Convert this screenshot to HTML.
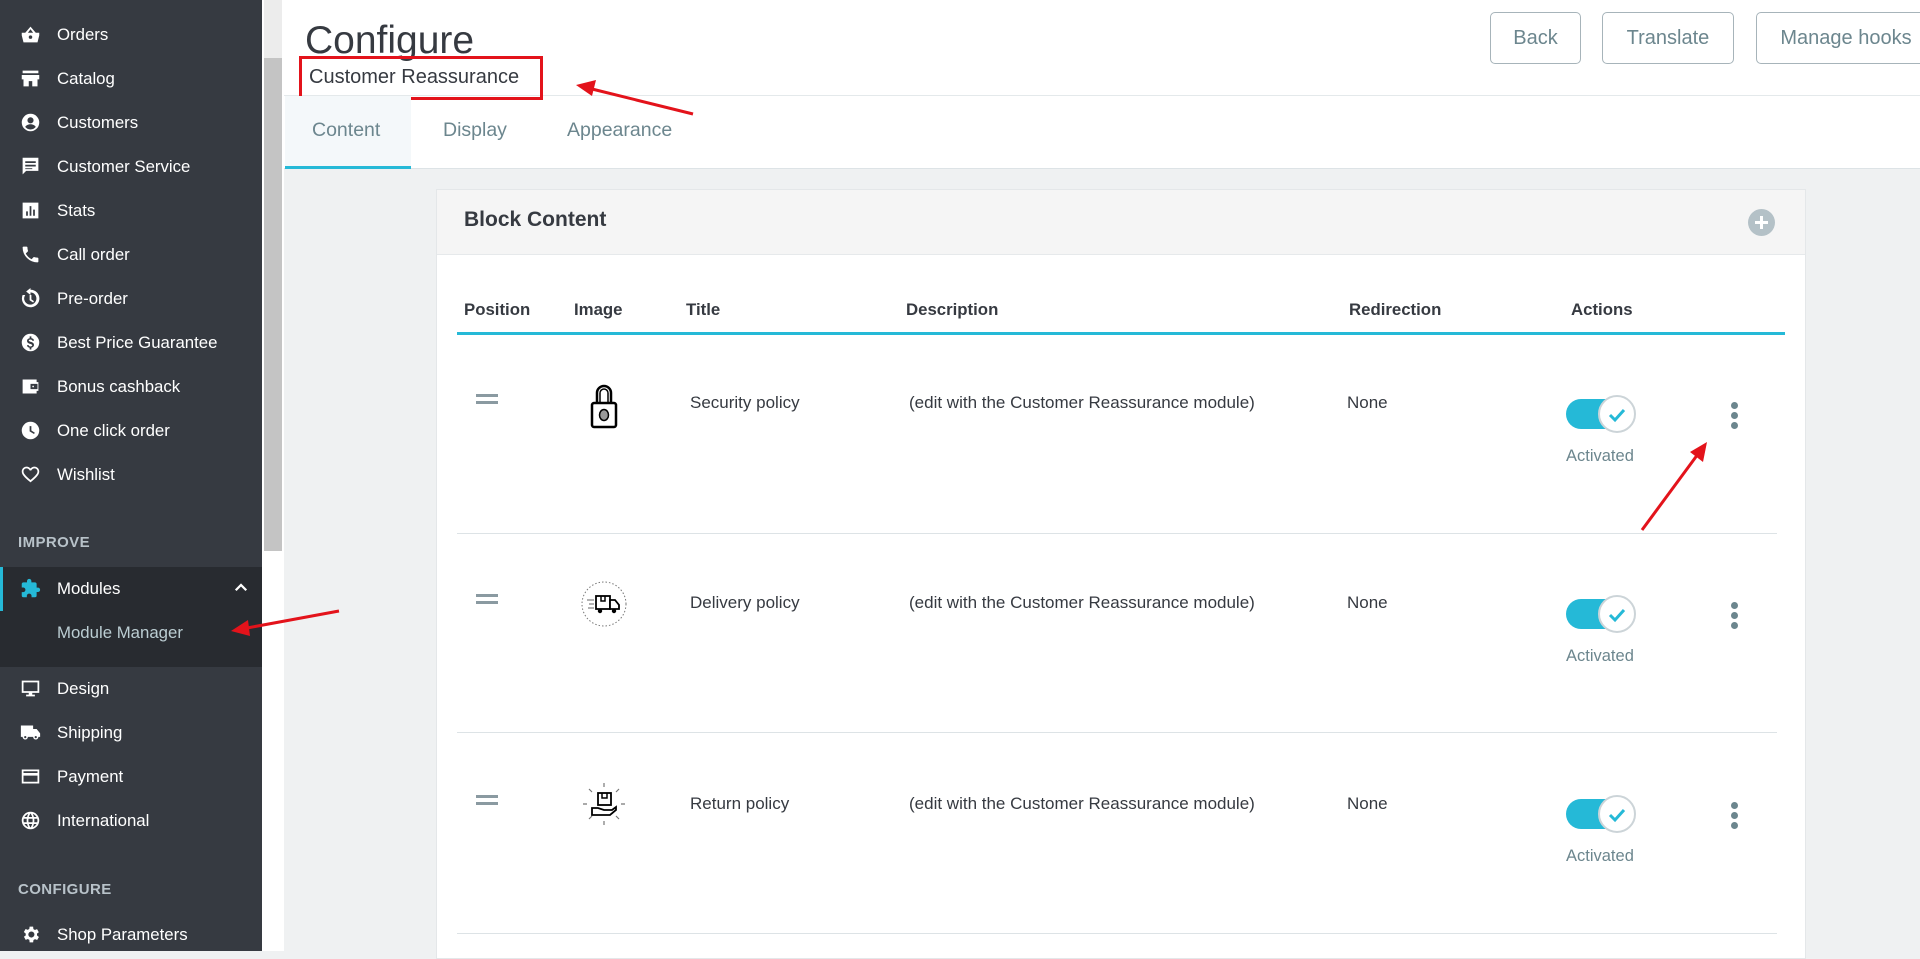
<!DOCTYPE html>
<html><head><meta charset="utf-8"><style>
*{margin:0;padding:0;box-sizing:border-box}
body{width:1920px;height:951px;overflow:hidden;background:#eff1f2;font-family:"Liberation Sans",sans-serif;position:relative}
.abs{position:absolute}
#sb{left:0;top:0;width:262px;height:951px;background:#363a41}
.mi{position:absolute;left:0;width:262px;height:30px;color:#fff;font-size:16.8px;line-height:30px}
.mi span{position:absolute;left:57px;top:1px;white-space:nowrap}
.mi svg{position:absolute;left:20px;top:5px;width:21px;height:21px;fill:#fff}
.sec{position:absolute;left:18px;color:#b8c2c9;font-size:15px;font-weight:bold;letter-spacing:.4px}
.btn{position:absolute;top:12px;height:52px;border:1px solid #a7b4ba;border-radius:5px;background:#fff;color:#6c868e;font-size:20px;line-height:50px;text-align:center}
.th{position:absolute;top:300px;font-size:16.8px;font-weight:bold;color:#363a41}
.td{position:absolute;font-size:17px;color:#363a41;white-space:nowrap}
.sep{position:absolute;left:457px;width:1320px;height:1px;background:#dde3e6}
.tog{position:absolute;width:72px;height:40px}
.act{position:absolute;font-size:16.5px;color:#6c868e}
.keb{position:absolute;width:8px}
.keb i{display:block;width:7px;height:7px;border-radius:50%;background:#6c868e;margin-bottom:3px}
.drag{position:absolute;width:22px}
.drag i{display:block;height:3px;background:#8a9aa1;margin-bottom:4px}
</style></head><body>
<div id="sb" class="abs"></div>
<div class="abs" style="left:262px;top:0;width:22px;height:951px;background:#fff"></div>
<div class="abs" style="left:264px;top:0;width:18px;height:58px;background:#ececec"></div>
<div class="abs" style="left:264px;top:58px;width:18px;height:493px;background:#c4c4c4"></div>

<div class="mi" style="top:19px"><svg viewBox="0 0 24 24"><path d="M12 3L6 10H2v3l2 8h16l2-8v-3h-4zM9 10l3-4 3 4zm3 7a2 2 0 110-4 2 2 0 010 4z"/></svg><span>Orders</span></div>
<div class="mi" style="top:63px"><svg viewBox="0 0 24 24"><path d="M3 3h18v3H3zM2 8h20v5h-2v8h-6v-6h-4v6H4v-8H2z"/></svg><span>Catalog</span></div>
<div class="mi" style="top:107px"><svg viewBox="0 0 24 24"><path d="M12 2a10 10 0 100 20 10 10 0 000-20zm0 4a3.5 3.5 0 110 7 3.5 3.5 0 010-7zm0 14a8 8 0 01-6-3c1-2 4-3 6-3s5 1 6 3a8 8 0 01-6 3z"/></svg><span>Customers</span></div>
<div class="mi" style="top:151px"><svg viewBox="0 0 24 24"><path d="M3 2h18v15H7l-4 4zm3 4v2h12V6zm0 4v2h12v-2zm0 4v1h8v-1z"/></svg><span>Customer Service</span></div>
<div class="mi" style="top:195px"><svg viewBox="0 0 24 24"><path d="M3 3h18v18H3zm4 10v5h2v-5zm4-6v11h2V7zm4 4v7h2v-7z"/></svg><span>Stats</span></div>
<div class="mi" style="top:239px"><svg viewBox="0 0 24 24"><path d="M6.6 10.8a15 15 0 006.6 6.6l2.2-2.2c.3-.3.7-.4 1-.2 1.1.4 2.3.6 3.600.6.6 0 1 .4 1 1V20c0 .6-.4 1-1 1A17 17 0 013 4c0-.6.4-1 1-1h3.5c.6 0 1 .4 1 1 0 1.3.2 2.5.6 3.6.1.3 0 .7-.2 1z"/></svg><span>Call order</span></div>
<div class="mi" style="top:283px"><svg viewBox="0 0 24 24"><path d="M12 2a10 10 0 11-9 6h3a7 7 0 106-3v3L7 4l5-4zm-1 6h2v5l3 2-1 1.5-4-2.5z"/></svg><span>Pre-order</span></div>
<div class="mi" style="top:327px"><svg viewBox="0 0 24 24"><path d="M12 2a10 10 0 100 20 10 10 0 000-20zm1 16v2h-2v-2c-2-.3-3-1.5-3-3h2c0 1 1 1.5 2 1.5s2-.5 2-1.3c0-2-6-1-6-5 0-1.5 1-2.7 3-3V5h2v2c2 .3 3 1.5 3 3h-2c0-.8-1-1.5-2-1.5s-2 .5-2 1.2c0 2 6 1 6 5 0 1.5-1 2.8-3 3.3z"/></svg><span>Best Price Guarantee</span></div>
<div class="mi" style="top:371px"><svg viewBox="0 0 24 24"><path d="M3 4h16v3h2v10h-2v3H3zm9 5v6h8V9zm3 2a1 1 0 110 2 1 1 0 010-2z"/></svg><span>Bonus cashback</span></div>
<div class="mi" style="top:415px"><svg viewBox="0 0 24 24"><path d="M12 2a10 10 0 100 20 10 10 0 000-20zm1 5v5l4 2.5-1 1.5-5-3V7z"/></svg><span>One click order</span></div>
<div class="mi" style="top:459px"><svg viewBox="0 0 24 24"><path d="M12 21l-1.5-1.3C5 15 2 12 2 8.5 2 5.5 4.5 3 7.5 3c1.7 0 3.4.8 4.5 2.1C13.1 3.8 14.8 3 16.5 3 19.5 3 22 5.5 22 8.5c0 3.5-3 6.5-8.5 11.2zm0-2.7c4.8-4.3 8-7 8-9.8C20 6.5 18.5 5 16.5 5c-1.5 0-3 1-3.6 2.4h-1.8C10.5 6 9 5 7.5 5 5.5 5 4 6.5 4 8.5c0 2.8 3.2 5.5 8 9.8z"/></svg><span>Wishlist</span></div>

<div class="sec" style="top:534px">IMPROVE</div>
<div class="abs" style="left:0;top:567px;width:262px;height:100px;background:#282b30"></div>
<div class="abs" style="left:0;top:567px;width:3px;height:44px;background:#25b9d7"></div>
<div class="mi" style="top:573px"><svg viewBox="0 0 24 24" style="fill:#25b9d7"><path d="M20.5 11H19V7a2 2 0 00-2-2h-4V3.5a2.5 2.5 0 00-5 0V5H4a2 2 0 00-2 2v3.8h1.5a2.7 2.7 0 010 5.4H2V20a2 2 0 002 2h3.8v-1.5a2.7 2.7 0 015.4 0V22H17a2 2 0 002-2v-4h1.5a2.5 2.5 0 000-5z"/></svg><span>Modules</span><svg viewBox="0 0 24 24" style="left:232px;top:6px;width:18px;height:18px;fill:none;stroke:#fff;stroke-width:3"><path d="M5 15l7-7 7 7"/></svg></div>
<div class="mi" style="top:617px;color:#bbcdd2"><span>Module Manager</span></div>
<div class="mi" style="top:673px"><svg viewBox="0 0 24 24"><path d="M2 3h20v14h-8v2h3v2H7v-2h3v-2H2zm2 2v10h16V5z"/></svg><span>Design</span></div>
<div class="mi" style="top:717px"><svg viewBox="0 0 24 24"><path d="M1 4h14v4h4l4 5v4h-2a3 3 0 01-6 0H9a3 3 0 01-6 0H1zm5 12a1.3 1.3 0 100 2.6A1.3 1.3 0 006 16zm12 0a1.3 1.3 0 100 2.6 1.3 1.3 0 000-2.6z"/></svg><span>Shipping</span></div>
<div class="mi" style="top:761px"><svg viewBox="0 0 24 24"><path d="M2 4h20v16H2zm2 2v2h16V6zm0 5v7h16v-7z"/></svg><span>Payment</span></div>
<div class="mi" style="top:805px"><svg viewBox="0 0 24 24"><path d="M12 2a10 10 0 100 20 10 10 0 000-20zm6.9 6h-3a15 15 0 00-1.3-3.6A8 8 0 0118.9 8zM12 4c.8 1.2 1.5 2.5 1.900 4h-3.8c.4-1.5 1.1-2.8 1.9-4zM4.3 14a8 8 0 010-4h3.4a16 16 0 000 4zm.8 2h3a15 15 0 001.3 3.6A8 8 0 015.1 16zm3-8h-3a8 8 0 014.3-3.6C8.8 5.5 8.4 6.7 8.1 8zM12 20c-.8-1.2-1.5-2.5-1.9-4h3.8c-.4 1.5-1.1 2.8-1.9 4zm2.3-6H9.7a15 15 0 010-4h4.6a15 15 0 010 4zm.3 5.6c.6-1.1 1-2.3 1.3-3.6h3a8 8 0 01-4.3 3.6zm1.7-5.6a16 16 0 000-4h3.4a8 8 0 010 4z"/></svg><span>International</span></div>
<div class="sec" style="top:881px">CONFIGURE</div>
<div class="mi" style="top:919px"><svg viewBox="0 0 24 24"><path d="M19.4 13a7.5 7.5 0 000-2l2.1-1.6-2-3.5-2.5 1a7 7 0 00-1.7-1L15 3h-4l-.4 2.7a7 7 0 00-1.7 1l-2.5-1-2 3.5L6.6 11a7.5 7.5 0 000 2l-2.1 1.6 2 3.5 2.5-1a7 7 0 001.7 1L11 21h4l.4-2.7a7 7 0 001.7-1l2.5 1 2-3.5zM13 15.5a3.5 3.5 0 110-7 3.5 3.5 0 010 7z"/></svg><span>Shop Parameters</span></div>

<!-- header -->
<div class="abs" style="left:284px;top:0;width:1636px;height:169px;background:#fff"></div>
<div class="abs" style="left:284px;top:95px;width:1636px;height:1px;background:#e4e9eb"></div>
<div class="abs" style="left:284px;top:168px;width:1636px;height:1px;background:#dde3e6"></div>
<div class="abs" style="left:305px;top:19px;font-size:39px;color:#363a41">Configure</div>
<div class="abs" style="left:309px;top:66px;font-size:20px;color:#363a41">Customer Reassurance</div>
<div class="abs" style="left:299px;top:56px;width:244px;height:44px;border:3px solid #e3131b"></div>
<div class="btn" style="left:1490px;width:91px">Back</div>
<div class="btn" style="left:1602px;width:132px">Translate</div>
<div class="btn" style="left:1756px;width:180px">Manage hooks</div>
<div class="abs" style="left:285px;top:96px;width:126px;height:73px;background:#f4f8fa;border-bottom:3px solid #25b9d7"></div>
<div class="abs" style="left:312px;top:119px;font-size:19.5px;color:#6c868e">Content</div>
<div class="abs" style="left:443px;top:119px;font-size:19.5px;color:#6c868e">Display</div>
<div class="abs" style="left:567px;top:119px;font-size:19.5px;color:#6c868e">Appearance</div>

<!-- panel -->
<div class="abs" style="left:436px;top:189px;width:1370px;height:770px;background:#fff;border:1px solid #e4e7e9"></div>
<div class="abs" style="left:437px;top:190px;width:1368px;height:65px;background:#f5f5f5;border-bottom:1px solid #e6e9eb"></div>
<div class="abs" style="left:464px;top:208px;font-size:21px;font-weight:bold;color:#363a41">Block Content</div>
<svg class="abs" style="left:1748px;top:209px" width="27" height="27" viewBox="0 0 27 27"><circle cx="13.5" cy="13.5" r="13.5" fill="#b4c1c7"/><path d="M13.5 7v13M7 13.5h13" stroke="#fff" stroke-width="3"/></svg>

<div class="th" style="left:464px">Position</div>
<div class="th" style="left:574px">Image</div>
<div class="th" style="left:686px">Title</div>
<div class="th" style="left:906px">Description</div>
<div class="th" style="left:1349px">Redirection</div>
<div class="th" style="left:1571px">Actions</div>
<div class="abs" style="left:457px;top:332px;width:1328px;height:3px;background:#25b9d7"></div>

<div class="sep" style="top:533px"></div>
<div class="sep" style="top:732px"></div>
<div class="sep" style="top:933px"></div>

<!-- row 1 -->
<div class="drag" style="left:476px;top:394px"><i></i><i></i></div>
<svg class="abs" style="left:584px;top:381px" width="40" height="50" viewBox="0 0 40 50"><path d="M13 22V12a7 7 0 0114 0v10" fill="none" stroke="#000" stroke-width="2.5"/><path d="M16 22V12a4 4 0 018 0v10" fill="none" stroke="#000" stroke-width="1.5"/><rect x="8" y="22" width="24" height="24" rx="2" fill="#fff" stroke="#000" stroke-width="2.5"/><ellipse cx="20" cy="34" rx="4.5" ry="5.5" fill="#999" stroke="#000" stroke-width="1.5"/></svg>
<div class="td" style="left:690px;top:393px">Security policy</div>
<div class="td" style="left:909px;top:393px">(edit with the Customer Reassurance module)</div>
<div class="td" style="left:1347px;top:393px">None</div>

<!-- row 2 -->
<div class="drag" style="left:476px;top:594px"><i></i><i></i></div>
<svg class="abs" style="left:580px;top:580px" width="48" height="48" viewBox="0 0 48 48"><circle cx="24" cy="24" r="22" fill="none" stroke="#777" stroke-width="1" stroke-dasharray="1.5 2"/><rect x="16" y="16" width="14" height="13" fill="#fff" stroke="#000" stroke-width="1.8"/><path d="M30 20h5l4 5v4h-9z" fill="#fff" stroke="#000" stroke-width="1.8"/><circle cx="20" cy="31" r="2.2" fill="#000"/><circle cx="34" cy="31" r="2.2" fill="#000"/><path d="M7 20h7M9 24h5M8 28h6" stroke="#666" stroke-width="1"/><path d="M21 16v5h4v-5" fill="none" stroke="#000" stroke-width="1.5"/></svg>
<div class="td" style="left:690px;top:593px">Delivery policy</div>
<div class="td" style="left:909px;top:593px">(edit with the Customer Reassurance module)</div>
<div class="td" style="left:1347px;top:593px">None</div>

<!-- row 3 -->
<div class="drag" style="left:476px;top:795px"><i></i><i></i></div>
<svg class="abs" style="left:580px;top:780px" width="48" height="48" viewBox="0 0 48 48"><path d="M24 3v4M24 41v4M3 24h4M41 24h4M9 9l3 3M36 36l3 3M39 9l-3 3M9 39l3-3" stroke="#777" stroke-width="1.2"/><rect x="18" y="13" width="13" height="12" fill="#fff" stroke="#000" stroke-width="1.8"/><path d="M22 13v5h5v-5" fill="none" stroke="#000" stroke-width="1.5"/><path d="M12 28h6l6 2h8l4-3v3l-6 5H12z" fill="#fff" stroke="#000" stroke-width="1.8"/></svg>
<div class="td" style="left:690px;top:794px">Return policy</div>
<div class="td" style="left:909px;top:794px">(edit with the Customer Reassurance module)</div>
<div class="td" style="left:1347px;top:794px">None</div>

<!-- toggles -->
<svg class="tog" style="left:1565px;top:394px" viewBox="0 0 72 40"><rect x="1" y="5" width="58" height="30" rx="15" fill="#25b9d7"/><circle cx="52" cy="20" r="18" fill="#fff" stroke="#ccd4d8" stroke-width="2"/><path d="M45 21l5 5 9-10" fill="none" stroke="#25b9d7" stroke-width="3"/></svg>
<div class="act" style="left:1566px;top:447px">Activated</div>
<div class="keb" style="left:1731px;top:402px"><i></i><i></i><i></i></div>
<svg class="tog" style="left:1565px;top:594px" viewBox="0 0 72 40"><rect x="1" y="5" width="58" height="30" rx="15" fill="#25b9d7"/><circle cx="52" cy="20" r="18" fill="#fff" stroke="#ccd4d8" stroke-width="2"/><path d="M45 21l5 5 9-10" fill="none" stroke="#25b9d7" stroke-width="3"/></svg>
<div class="act" style="left:1566px;top:647px">Activated</div>
<div class="keb" style="left:1731px;top:602px"><i></i><i></i><i></i></div>
<svg class="tog" style="left:1565px;top:794px" viewBox="0 0 72 40"><rect x="1" y="5" width="58" height="30" rx="15" fill="#25b9d7"/><circle cx="52" cy="20" r="18" fill="#fff" stroke="#ccd4d8" stroke-width="2"/><path d="M45 21l5 5 9-10" fill="none" stroke="#25b9d7" stroke-width="3"/></svg>
<div class="act" style="left:1566px;top:847px">Activated</div>
<div class="keb" style="left:1731px;top:802px"><i></i><i></i><i></i></div>

<!-- red arrows -->
<svg class="abs" style="left:0;top:0" width="1920" height="951">
<g stroke="#e3131b" stroke-width="3" fill="#e3131b">
<line x1="693" y1="114" x2="592" y2="89"/><polygon points="576,85 596,80 592,96" stroke="none"/>
<line x1="1642" y1="530" x2="1698" y2="454"/><polygon points="1707,442 1703,462 1690,452" stroke="none"/>
<line x1="339" y1="611" x2="247" y2="628"/><polygon points="231,631 248,620 250,636" stroke="none"/>
</g></svg>
</body></html>
